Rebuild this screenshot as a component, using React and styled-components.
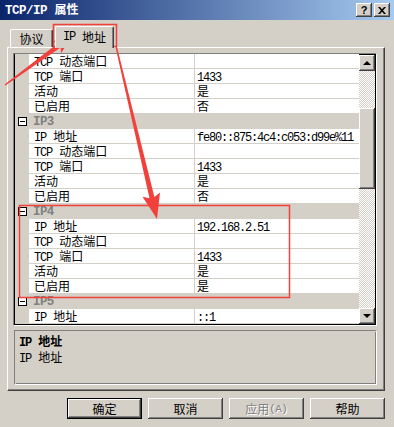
import React from 'react';
import styled, { createGlobalStyle, css } from 'styled-components';

const GlobalStyle = createGlobalStyle`
  html, body {
    margin: 0;
    padding: 0;
    background: #d4d0c8;
  }
`;

const FACE = '#d4d0c8';
const RED = '#f2403a';

const raised = css`
  background: ${FACE};
  box-shadow: inset -1px -1px #404040, inset 1px 1px #fff, inset -2px -2px #808080,
    inset 2px 2px ${FACE};
`;

const rows = [
  { name: 'TCP 动态端口', value: '' },
  { name: 'TCP 端口', value: '1433' },
  { name: '活动', value: '是' },
  { name: '已启用', value: '否' },
  { group: 'IP3' },
  { name: 'IP 地址', value: 'fe80::875:4c4:c053:d99e%11' },
  { name: 'TCP 动态端口', value: '' },
  { name: 'TCP 端口', value: '1433' },
  { name: '活动', value: '是' },
  { name: '已启用', value: '否' },
  { group: 'IP4' },
  { name: 'IP 地址', value: '192.168.2.51' },
  { name: 'TCP 动态端口', value: '' },
  { name: 'TCP 端口', value: '1433' },
  { name: '活动', value: '是' },
  { name: '已启用', value: '是' },
  { group: 'IP5' },
  { name: 'IP 地址', value: '::1' },
];

const buttons = [
  { label: '确定', isDefault: true },
  { label: '取消' },
  { label: '应用(A)', disabled: true },
  { label: '帮助' },
];

// tapered annotation arrow, tail -> tip
const arrow = (x1, y1, x2, y2, tail, neck, headLen, headW) => {
  const dx = x2 - x1;
  const dy = y2 - y1;
  const len = Math.hypot(dx, dy);
  const ux = dx / len;
  const uy = dy / len;
  const nx = -uy;
  const ny = ux;
  const bx = x2 - ux * headLen;
  const by = y2 - uy * headLen;
  const wx = bx - ux * 3;
  const wy = by - uy * 3;
  const p = (x, y, k) => `${(x + nx * k).toFixed(1)},${(y + ny * k).toFixed(1)}`;
  return [
    p(x1, y1, tail / 2),
    p(bx, by, neck / 2),
    p(wx, wy, headW / 2),
    `${x2},${y2}`,
    p(wx, wy, -headW / 2),
    p(bx, by, -neck / 2),
    p(x1, y1, -tail / 2),
  ].join(' ');
};

const Mixed = ({ text, size, ls }) =>
  text
    .split(/([\x20-\x7e]+)/)
    .filter(Boolean)
    .map((part, i) =>
      /^[\x20-\x7e]+$/.test(part) ? (
        <Latin key={i} $size={size} $ls={ls}>
          {part}
        </Latin>
      ) : (
        <span key={i}>{part}</span>
      )
    );

const App = () => (
  <>
    <GlobalStyle />
    <Window>
      <TitleBar>
        <Title>
          <Mixed text="TCP/IP 属性" size={12.5} ls={-0.5} />
        </Title>
        <CaptionButtons>
          <CapButton>?</CapButton>
          <CapButton>
            <svg width="8" height="7" viewBox="0 0 8 7">
              <path d="M0 0h2l2 2.2L6 0h2L5 3.5 8 7H6L4 4.8 2 7H0l3-3.5z" fill="#000" />
            </svg>
          </CapButton>
        </CaptionButtons>
      </TitleBar>

      <TabStrip>
        <Tab>协议</Tab>
        <Tab $active>
          <Mixed text="IP 地址" />
        </Tab>
      </TabStrip>

      <Page>
        <Grid>
          <Rows>
            {rows.map((r, i) =>
              r.group ? (
                <GroupRow key={i}>
                  <Margin>
                    <Collapse />
                  </Margin>
                  <GroupLabel>{r.group}</GroupLabel>
                </GroupRow>
              ) : (
                <PropRow key={i}>
                  <Margin />
                  <NameCell>
                    <Mixed text={r.name} />
                  </NameCell>
                  <ValueCell>{r.value && <Mixed text={r.value} />}</ValueCell>
                </PropRow>
              )
            )}
          </Rows>
          <ScrollBar>
            <ScrollButton>
              <Tri $up />
            </ScrollButton>
            <Track $h={37} />
            <Thumb />
            <Track />
            <ScrollButton>
              <Tri />
            </ScrollButton>
          </ScrollBar>
        </Grid>

        <Description>
          <DescTitle>
            <Mixed text="IP 地址" />
          </DescTitle>
          <DescText>
            <Mixed text="IP 地址" />
          </DescText>
        </Description>
      </Page>

      <ButtonRow>
        {buttons.map((b) => (
          <Button key={b.label} $default={b.isDefault} $disabled={b.disabled}>
            <Mixed text={b.label} size={11} ls={-0.6} />
          </Button>
        ))}
      </ButtonRow>

      <Overlay width="394" height="427" viewBox="0 0 394 427">
        <rect x="53.5" y="24.5" width="63" height="22" fill="none" stroke={RED} strokeWidth="1.5" />
        <rect x="19.5" y="205.5" width="270" height="92" fill="none" stroke={RED} strokeWidth="1.5" />
        <polygon points={arrow(5, 85, 72, 36, 1.5, 5, 16, 15)} fill={RED} />
        <polygon points={arrow(116, 46, 157, 219, 1.5, 5, 22, 18)} fill={RED} />
      </Overlay>
    </Window>
  </>
);

const Window = styled.div`
  position: relative;
  width: 394px;
  height: 427px;
  overflow: hidden;
  display: flex;
  flex-direction: column;
  background: ${FACE};
  font-family: 'Noto Sans CJK SC', sans-serif;
  font-size: 12px;
  line-height: 14px;
  color: #000;
`;

const Latin = styled.span`
  font-family: 'Liberation Mono', 'Noto Sans CJK SC', monospace;
  font-size: ${(p) => p.$size || 12}px;
  letter-spacing: ${(p) => (p.$ls !== undefined ? p.$ls : -1.2)}px;
  padding-right: ${(p) => -(p.$ls !== undefined ? p.$ls : -1.2)}px;
  line-height: 14px;
  white-space: pre;
`;

const TitleBar = styled.div`
  height: 20px;
  flex: 0 0 20px;
  display: flex;
  align-items: center;
  padding: 0 4px 0 5px;
  background: linear-gradient(to right, #0a246a, #a6caf0);
`;

const Title = styled.div`
  color: #fff;
  font-weight: bold;
  font-size: 12px;
`;

const CaptionButtons = styled.div`
  margin-left: auto;
  display: flex;
  gap: 2px;
`;

const CapButton = styled.div`
  ${raised};
  width: 16px;
  height: 14px;
  display: flex;
  align-items: center;
  justify-content: center;
  font-family: 'Liberation Sans', sans-serif;
  font-weight: bold;
  font-size: 11px;
`;

const TabStrip = styled.div`
  position: relative;
  z-index: 1;
  height: 27px;
  flex: 0 0 27px;
  display: flex;
  align-items: flex-end;
  gap: 2px;
  padding-left: 10px;
`;

const Tab = styled.div`
  box-sizing: border-box;
  display: flex;
  align-items: center;
  justify-content: center;
  background: ${FACE};
  border-top: 1px solid #fff;
  border-left: 1px solid #fff;
  border-right: 1px solid #404040;
  box-shadow: inset -1px 0 #808080;
  border-radius: 2px 2px 0 0;
  height: ${(p) => (p.$active ? 22 : 18)}px;
  width: ${(p) => (p.$active ? 59 : 43)}px;
  margin-bottom: ${(p) => (p.$active ? -1 : 0)}px;
  padding-bottom: ${(p) => (p.$active ? 2 : 0)}px;
`;

const Page = styled.div`
  box-sizing: border-box;
  height: 344px;
  margin: 0 9px 0 7px;
  padding: 5px 7px 0 5px;
  display: flex;
  flex-direction: column;
  border: 1px solid;
  border-color: #fff #404040 #404040 #fff;
  box-shadow: inset -1px -1px #808080;
`;

const Grid = styled.div`
  box-sizing: border-box;
  height: 273px;
  flex: 0 0 273px;
  display: flex;
  overflow: hidden;
  background: #fff;
  border: 1px solid;
  border-color: #808080 #fff #fff #808080;
  box-shadow: inset 1px 1px #000, inset -1px -1px #000;
  padding: 1px;
`;

const Rows = styled.div`
  flex: 1;
  margin-top: -1px;
  display: flex;
  flex-direction: column;
`;

const PropRow = styled.div`
  height: 15px;
  flex: 0 0 15px;
  display: grid;
  grid-template-columns: 14px 166px 1fr;
`;

const GroupRow = styled.div`
  height: 15px;
  flex: 0 0 15px;
  display: flex;
  align-items: center;
  background: ${FACE};
`;

const Margin = styled.div`
  width: 14px;
  height: 15px;
  display: flex;
  align-items: center;
  justify-content: center;
  background: ${FACE};
`;

const Collapse = styled.div`
  position: relative;
  box-sizing: border-box;
  width: 9px;
  height: 9px;
  border: 1px solid #000;
  background: #fff;

  &::after {
    content: '';
    position: absolute;
    left: 1px;
    top: 3px;
    width: 5px;
    height: 1px;
    background: #000;
  }
`;

const GroupLabel = styled.div`
  padding-left: 4px;
  font-family: 'Liberation Mono', monospace;
  font-weight: bold;
  font-size: 12.5px;
  letter-spacing: -0.6px;
  color: #808080;
`;

const cell = css`
  box-sizing: border-box;
  height: 15px;
  background: #fff;
  border-bottom: 1px solid ${FACE};
  white-space: nowrap;
`;

const NameCell = styled.div`
  ${cell};
  padding-left: 5px;
  border-right: 1px solid ${FACE};
`;

const ValueCell = styled.div`
  ${cell};
  padding-left: 2px;
`;

const ScrollBar = styled.div`
  width: 16px;
  flex: 0 0 16px;
  display: flex;
  flex-direction: column;
`;

const ScrollButton = styled.div`
  ${raised};
  height: 16px;
  flex: 0 0 16px;
  display: flex;
  align-items: center;
  justify-content: center;
`;

const Tri = styled.div`
  width: 0;
  height: 0;
  border-left: 4px solid transparent;
  border-right: 4px solid transparent;
  ${(p) => (p.$up ? 'border-bottom: 4px solid #000;' : 'border-top: 4px solid #000;')}
`;

const Track = styled.div`
  flex: ${(p) => (p.$h ? `0 0 ${p.$h}px` : 1)};
  background: repeating-conic-gradient(${FACE} 0 25%, #fff 0 50%) 0 0 / 2px 2px;
`;

const Thumb = styled.div`
  ${raised};
  height: 81px;
  flex: 0 0 81px;
`;

const Description = styled.div`
  box-sizing: border-box;
  height: 55px;
  margin: 4px 0 0 1px;
  padding: 3px 4px;
  border: 1px solid;
  border-color: #808080 #fff #fff #808080;
  box-shadow: inset 1px 1px ${FACE}, inset -1px -1px #808080;
`;

const DescTitle = styled.div`
  font-weight: bold;
`;

const DescText = styled.div``;

const ButtonRow = styled.div`
  display: flex;
  justify-content: flex-end;
  gap: 6px;
  margin-top: 7px;
  padding-right: 9px;
`;

const Button = styled.div`
  ${raised};
  box-sizing: border-box;
  width: 75px;
  height: 21px;
  display: flex;
  align-items: center;
  justify-content: center;
  ${(p) =>
    p.$default &&
    css`
      border: 1px solid #000;
    `}
  ${(p) =>
    p.$disabled &&
    css`
      color: #808080;
      text-shadow: 1px 1px #fff;
    `}
`;

const Overlay = styled.svg`
  position: absolute;
  left: 0;
  top: 0;
  pointer-events: none;
`;

export default App;
